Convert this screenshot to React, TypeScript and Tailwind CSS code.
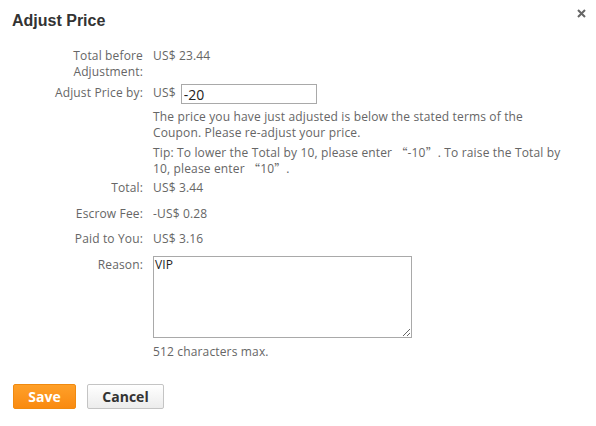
import { useState } from "react";

const label = "w-[131px] shrink-0 text-right";
const cjk = "inline-block align-top h-4 leading-4 font-['Noto_Sans_CJK_SC',sans-serif]";

export default function App() {
  const [amount, setAmount] = useState("-20");
  const [reason, setReason] = useState("VIP");

  return (
    <div className="relative w-[596px] h-[426px] bg-white text-[12px] leading-4 tracking-[0.15px] text-[#666] font-['Open_Sans',sans-serif]">
      <button className="absolute top-[9px] right-[10px] text-[#666]">
        <svg width="9" height="9" viewBox="0 0 9 9">
          <path d="M1 1L8 8M8 1L1 8" stroke="currentColor" strokeWidth="2" />
        </svg>
      </button>

      <h2 className="pl-3 pt-[12px] text-[16px] leading-[18px] tracking-normal font-bold text-[#333] font-['Liberation_Sans',Arial,sans-serif]">
        Adjust Price
      </h2>

      <div className="pl-3 pt-[18px]">
        {/* Total before */}
        <div className="flex gap-[10px]">
          <div className={label}>
            Total before
            <br />
            Adjustment:
          </div>
          <div>US$ 23.44</div>
        </div>

        {/* Adjust by */}
        <div className="flex gap-[10px] mt-1">
          <div className={`${label} pt-[1px]`}>Adjust Price by:</div>
          <div>
            <div className="flex items-start gap-[5px]">
              <span className="pt-[1px]">US$</span>
              <input
                value={amount}
                onChange={e => setAmount(e.target.value)}
                className="w-[136px] h-5 border border-[#a9a9a9] px-[2px] text-[14px] tracking-normal text-[#222] outline-none"
              />
            </div>
            <p className="mt-[5px] w-[400px]">
              The price you have just adjusted is below the stated terms of the Coupon. Please re-adjust your price.
            </p>
            <p className="mt-1 w-[425px]">
              Tip: To lower the Total by 10, please enter <span className={cjk}>“</span>-10<span className={cjk}>”</span>. To raise the Total by 10, please enter <span className={cjk}>“</span>10<span className={cjk}>”</span>.
            </p>
          </div>
        </div>

        <div className="flex gap-[10px] mt-[3px]">
          <div className={label}>Total:</div>
          <div>US$ 3.44</div>
        </div>
        <div className="flex gap-[10px] mt-[10px]">
          <div className={label}>Escrow Fee:</div>
          <div>-US$ 0.28</div>
        </div>
        <div className="flex gap-[10px] mt-[9px]">
          <div className={label}>Paid to You:</div>
          <div>US$ 3.16</div>
        </div>

        <div className="flex gap-[10px] mt-[9px]">
          <div className={`${label} pt-[1px]`}>Reason:</div>
          <div>
            <textarea
              value={reason}
              onChange={e => setReason(e.target.value)}
              className="block w-[259px] h-[82px] border border-[#a9a9a9] px-[1px] py-0 text-[12px] text-[#222] outline-none resize"
            />
            <div className="mt-[6px]">512 characters max.</div>
          </div>
        </div>

        <div className="flex gap-[11px] mt-[24px] pl-[1px]">
          <button className="w-[63px] h-[25px] rounded-[2px] border border-[#f08a10] bg-gradient-to-b from-[#ffa028] to-[#f98a0f] text-[14px] tracking-normal font-bold text-white">
            Save
          </button>
          <button className="w-[77px] h-[25px] rounded-[2px] border border-[#c4c4c4] bg-gradient-to-b from-[#ffffff] to-[#ececec] text-[14px] tracking-normal font-bold text-[#333]">
            Cancel
          </button>
        </div>
      </div>
    </div>
  );
}
